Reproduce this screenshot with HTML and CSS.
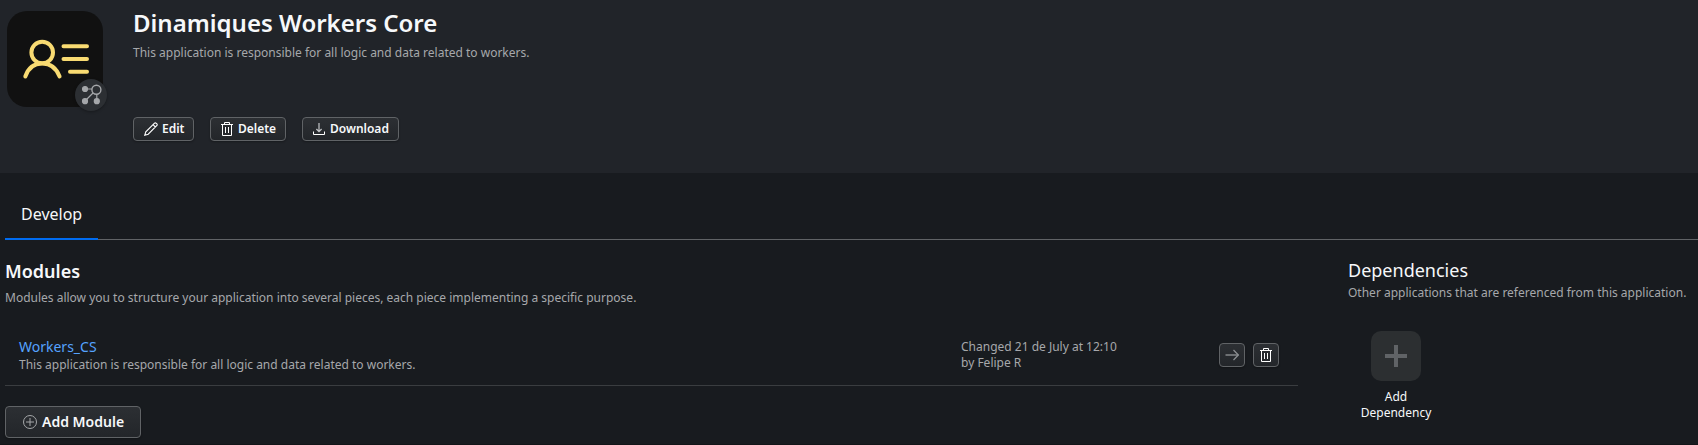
FILE: index.html
```
<!DOCTYPE html>
<html lang="en">
<head>
<meta charset="utf-8">
<title>Dinamiques Workers Core</title>
<link rel="stylesheet" href="styles.css">
</head>
<body>
<header class="app-header">
  <div class="app-icon">
    <svg width="96" height="96" viewBox="0 0 96 96" fill="none" stroke="#f9db72" stroke-width="4" stroke-linecap="round"><circle cx="35.2" cy="41.5" r="10.8"/><path d="M18.3 65.5C21 57.5 27 52.5 35.2 52.5S49.5 57.5 52.6 65.5M56.5 35.2H80M56.5 48H80M63 60.8H80"/></svg>
    <span class="badge"><svg width="32" height="32" viewBox="0 0 32 32" fill="#a5a7aa" stroke="#a5a7aa" stroke-width="1.2"><path fill="none" d="M10 10H17M18 14L10 22M21.8 15V21"/><circle cx="10" cy="10" r="2.5"/><circle cx="10" cy="22.2" r="2.5"/><circle cx="21.8" cy="22.2" r="2.5"/><circle cx="21.4" cy="10.7" r="4.5" fill="none" stroke-width="1.4"/></svg></span>
  </div>
  <div class="app-info">
    <h1 class="app-title">Dinamiques Workers Core</h1>
    <p class="muted app-desc">This application is responsible for all logic and data related to workers.</p>
    <div class="actions">
      <button class="btn btn-edit"><svg width="14" height="14" viewBox="0 0 14 14" fill="none" stroke="#fff" stroke-width="1.1"><path d="M.8 13.2L1.8 9.8L10.3 1.3Q11.3.3 12.3 1.3L12.7 1.7Q13.7 2.7 12.7 3.7L4.2 12.2ZM9 2.6L11.4 5"/></svg>Edit</button>
      <button class="btn btn-delete"><svg width="12" height="14" viewBox="0 0 12 14" fill="none" stroke="#fff"><path d="M0 2.5H12M3.5 2.5V.5H8.5V2.5M1.5 2.5V13.5H10.5V2.5M4.5 5V11M7.5 5V11"/></svg>Delete</button>
      <button class="btn btn-download"><svg width="12" height="12" viewBox="0 0 12 12" fill="none" stroke="#fff"><path d="M.5 8.5V11.5H11.5V8.5"/><path stroke="#c4c6c8" stroke-width="1.2" d="M6 0V8.5M3.4 6L6 8.6L8.6 6"/></svg>Download</button>
    </div>
  </div>
</header>
<nav class="tabs"><a class="tab">Develop</a></nav>
<main class="content">
  <section class="modules">
    <h2 class="modules-title">Modules</h2>
    <p class="muted modules-desc">Modules allow you to structure your application into several pieces, each piece implementing a specific purpose.</p>
    <div class="module-row">
      <div class="module-main"><a class="module-link">Workers_CS</a><p class="muted">This application is responsible for all logic and data related to workers.</p></div>
      <p class="muted module-changed">Changed 21 de July at 12:10<br>by Felipe R</p>
      <div class="row-actions">
        <button class="btn btn-icon" aria-label="Open"><svg width="14" height="12" viewBox="0 0 14 12" fill="none" stroke="#8d9093"><path d="M.5 6H13.3" stroke="#6c6f72" stroke-width="2"/><path d="M8.5 1L13.3 6L8.5 11" stroke-width="1.2"/></svg></button>
        <button class="btn btn-icon" aria-label="Delete"><svg width="12" height="14" viewBox="0 0 12 14" fill="none" stroke="#fff"><path d="M0 2.5H12M3.5 2.5V.5H8.5V2.5M1.5 2.5V13.5H10.5V2.5M4.5 5V11M7.5 5V11"/></svg></button>
      </div>
    </div>
    <button class="btn btn-add"><svg width="14" height="14" viewBox="0 0 14 14" fill="none" stroke="#a5a7a9"><circle cx="7" cy="7" r="6.5"/><path d="M7 3V11M3 7H11"/></svg>Add Module</button>
  </section>
  <aside class="dependencies">
    <h2 class="dep-title">Dependencies</h2>
    <p class="muted">Other applications that are referenced from this application.</p>
    <div class="dep-add">
      <div class="dep-tile"><svg width="22" height="22" viewBox="0 0 22 22" stroke="#606366" stroke-width="4"><path d="M0 11H22M11 0V22"/></svg></div>
      <span>Add<br>Dependency</span>
    </div>
  </aside>
</main>
</body>
</html>
```
FILE: styles.css
```
* { box-sizing: border-box; }
body {
  margin: 0;
  height: 445px;
  overflow: hidden;
  border-bottom: 1px solid #131518;
  background: #181b1f;
  color: #f6f8fa;
  font: 12px/16px "Noto Sans", sans-serif;
}
h1, h2, p { margin: 0; }
.muted { color: #a6a8ab; }
.app-header {
  display: flex;
  gap: 30px;
  height: 173px;
  padding: 7px;
  background: #212429;
}
.app-icon {
  position: relative;
  width: 96px;
  height: 96px;
  margin-top: 4px;
  border-radius: 20px;
  background: #111;
}
.app-icon svg { display: block; }
.badge {
  position: absolute;
  left: 68px;
  top: 68px;
  width: 32px;
  height: 32px;
  border-radius: 50%;
  background: #2c2f33;
  box-shadow: 0 1px 3px rgba(0, 0, 0, .3);
}
.app-title { font-size: 24px; line-height: 32px; font-weight: 600; }
.app-desc { margin-top: 6px; }
.actions { display: flex; gap: 16px; margin-top: 56px; }
.btn {
  display: flex;
  align-items: center;
  height: 24px;
  padding: 0;
  border: 1px solid #606366;
  border-radius: 4px;
  background: linear-gradient(#2c2f33, #23262a);
  box-shadow: 0 1px 2px rgba(0, 0, 0, .3);
  color: #f6f8fa;
  font: 600 12px/16px "Noto Sans", sans-serif;
}
.btn svg { flex: none; }
.btn-edit { width: 61px; padding-left: 10px; gap: 4px; }
.btn-delete { width: 76px; padding-left: 10px; gap: 5px; }
.btn-download { width: 97px; padding-left: 10px; gap: 5px; }
.tabs {
  display: flex;
  height: 67px;
  margin-left: 5px;
  padding-top: 29px;
  background: linear-gradient(#606366, #606366) 0 66px / 100% 1px no-repeat;
}
.tab {
  width: 93px;
  padding-left: 16px;
  border-bottom: 2px solid #006cf0;
  font-size: 16px;
  line-height: 24px;
}
.content { display: flex; padding-left: 5px; }
.modules { width: 1293px; margin-right: 50px; padding-top: 19px; }
.modules-title { font-size: 18px; line-height: 24px; font-weight: 600; }
.modules-desc { margin-top: 7px; }
.module-row {
  display: flex;
  height: 80px;
  padding: 32px 19px 0 14px;
  border-bottom: 1px solid #3a3d40;
}
.module-main { width: 942px; }
.module-link { display: block; margin-bottom: 1px; color: #55a3ff; font-size: 14px; line-height: 18px; }
.module-changed { width: 258px; padding-top: 1px; }
.row-actions { display: flex; gap: 8px; padding-top: 5px; }
.btn-icon { width: 26px; justify-content: center; }
.btn-add {
  width: 136px;
  height: 32px;
  margin-top: 20px;
  padding-left: 17px;
  gap: 5px;
  font-size: 14px;
}
.dependencies { padding-top: 18px; white-space: nowrap; }
.dep-title { margin-bottom: 3px; font-size: 18px; line-height: 24px; font-weight: 400; }
.dep-add {
  display: flex;
  flex-direction: column;
  align-items: center;
  gap: 8px;
  width: 96px;
  margin-top: 30px;
  text-align: center;
}
.dep-tile {
  display: grid;
  place-items: center;
  width: 50px;
  height: 50px;
  border-radius: 10px;
  background: #2c2f31;
}
```
